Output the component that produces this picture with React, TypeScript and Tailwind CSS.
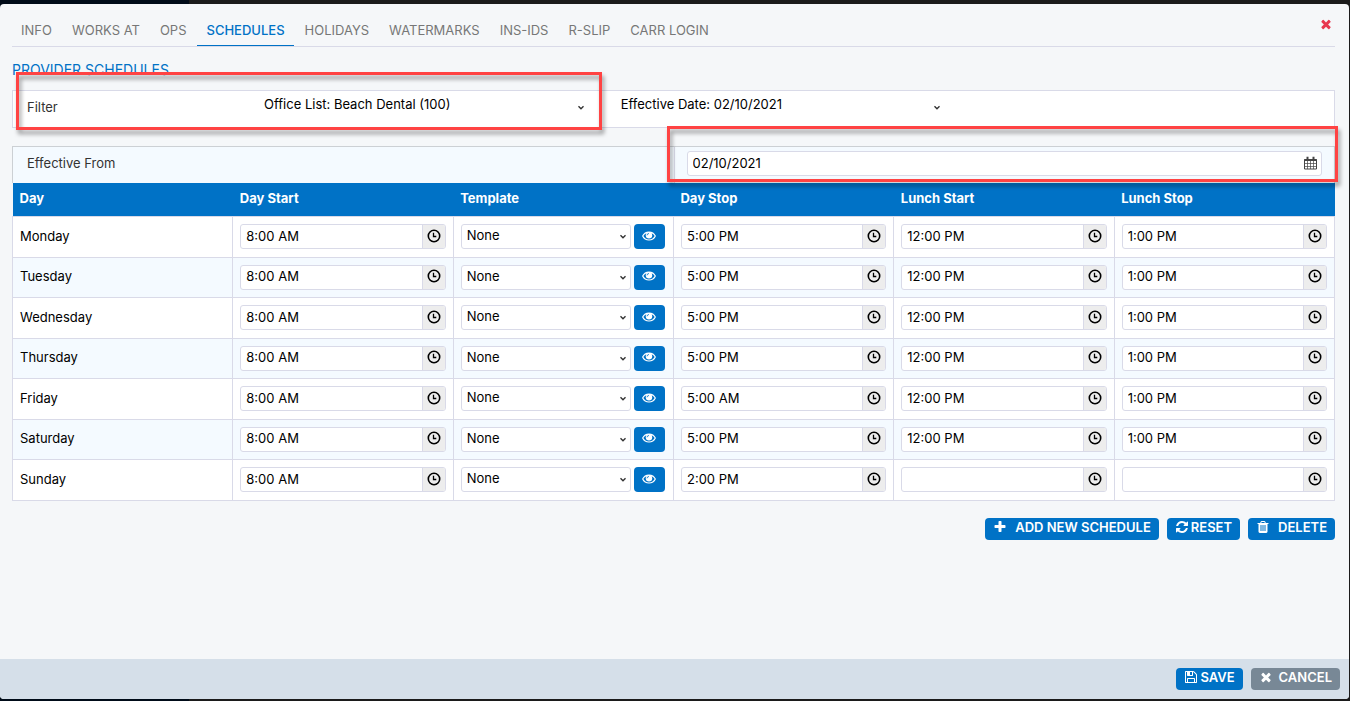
import React, { useState } from 'react';

const ICONS = {
  times: "M1490 1322q0 40-28 68l-136 136q-28 28-68 28t-68-28l-294-294-294 294q-28 28-68 28t-68-28l-136-136q-28-28-28-68t28-68l294-294-294-294q-28-28-28-68t28-68l136-136q28-28 68-28t68 28l294 294 294-294q28-28 68-28t68 28l136 136q28 28 28 68t-28 68l-294 294 294 294q28 28 28 68z",
  plus: "M1600 736v192q0 40-28 68t-68 28h-416v416q0 40-28 68t-68 28h-192q-40 0-68-28t-28-68v-416h-416q-40 0-68-28t-28-68v-192q0-40 28-68t68-28h416v-416q0-40 28-68t68-28h192q40 0 68 28t28 68v416h416q40 0 68 28t28 68z",
  refresh: "M1639 1056q0 5-1 7-64 268-268 434.5t-478 166.5q-146 0-282.500-55t-243.500-157l-129 129q-19 19-45 19t-45-19-19-45v-448q0-26 19-45t45-19h448q26 0 45 19t19 45-19 45l-137 137q71 66 161 102t187 36q134 0 250-65t186-179q11-17 53-117 8-23 30-23h192q13 0 22.500 9.500t9.500 22.500zm25-800v448q0 26-19 45t-45 19h-448q-26 0-45-19t-19-45 19-45l138-138q-148-137-349-137-134 0-250 65t-186 179q-11 17-53 117-8 23-30 23h-199q-13 0-22.500-9.500t-9.500-22.500v-7q65-268 270-434.500t480-166.500q146 0 284 55.500t245 156.500l130-129q19-19 45-19t45 19 19 45z",
  trash: "M704 1376v-704q0-14-9-23t-23-9h-64q-14 0-23 9t-9 23v704q0 14 9 23t23 9h64q14 0 23-9t9-23zm256 0v-704q0-14-9-23t-23-9h-64q-14 0-23 9t-9 23v704q0 14 9 23t23 9h64q14 0 23-9t9-23zm256 0v-704q0-14-9-23t-23-9h-64q-14 0-23 9t-9 23v704q0 14 9 23t23 9h64q14 0 23-9t9-23zm-544-992h448l-48-117q-7-9-17-11h-317q-10 2-17 11zm928 32v64q0 14-9 23t-23 9h-96v948q0 83-47 143.500t-113 60.500h-832q-66 0-113-58.500t-47-141.500v-952h-96q-14 0-23-9t-9-23v-64q0-14 9-23t23-9h309l70-167q15-37 54-63t79-26h320q40 0 79 26t54 63l70 167h309q14 0 23 9t9 23z",
  save: "M512 1536h768v-384h-768v384zm896 0h128v-896q0-14-10-38.500t-20-34.500l-281-281q-10-10-34-20t-39-10v416q0 40-28 68t-68 28h-576q-40 0-68-28t-28-68v-416h-128v1280h128v-416q0-40 28-68t68-28h832q40 0 68 28t28 68v416zm-384-928v-320q0-13-9.500-22.500t-22.500-9.500h-192q-13 0-22.500 9.500t-9.500 22.500v320q0 13 9.500 22.500t22.500 9.500h192q13 0 22.500-9.500t9.500-22.500zm640 32v928q0 40-28 68t-68 28h-1344q-40 0-68-28t-28-68v-1344q0-40 28-68t68-28h928q40 0 88 20t76 48l280 280q28 28 48 76t20 88z",
  eye: "M1664 960q-152-236-381-353 61 104 61 225 0 185-131.500 316.500t-316.500 131.500-316.500-131.500-131.500-316.500q0-121 61-225-229 117-381 353 133 205 333.500 326.500t434.500 121.500 434.500-121.500 333.500-326.500zm-720-384q0-20-14-34t-34-14q-125 0-214.500 89.500t-89.500 214.500q0 20 14 34t34 14 34-14 14-34q0-86 61-147t147-61q20 0 34-14t14-34zm848 384q0 34-20 69-140 230-376.500 368.500t-499.500 138.500-499.500-139-376.500-368q-20-35-20-69t20-69q140-229 376.500-368t499.500-139 499.500 139 376.500 368q20 35 20 69z",
};

const Icon = ({ name, className }: { name: keyof typeof ICONS; className: string }) => (
  <svg viewBox="0 0 1792 1792" fill="currentColor" className={className} aria-hidden="true">
    <path d={ICONS[name]} />
  </svg>
);

const ClockIcon = () => (
  <svg viewBox="0 0 14 14" fill="none" stroke="#000" className="h-3.5 w-3.5" aria-hidden="true">
    <circle cx="7" cy="7" r="5.7" strokeWidth="1.6" />
    <path d="M6.500 3.800v3.700h2.800" strokeWidth="1.3" />
  </svg>
);

// same almond as the eye icon, but with a filled pupil
const EyeIcon = () => (
  <svg viewBox="0 0 14 14" className="h-3.5 w-3.5" aria-hidden="true">
    <path d="M.7 7C3.200 1.700 10.800 1.700 13.300 7 10.800 12.300 3.200 12.300 .7 7z" fill="none" stroke="#fff" strokeWidth="1.2" />
    <circle cx="7" cy="6.300" r="3.200" fill="#fff" />
    <path d="M5 6.300A2 2 0 0 1 7 4.500" fill="none" stroke="#0072c6" strokeWidth=".8" />
  </svg>
);

const CalendarIcon = () => (
  <svg viewBox="0 0 13 14" fill="none" stroke="#444" className="h-3.5 w-[13px]" aria-hidden="true">
    <path d="M.5 3.500h12v9.500h-12z" />
    <path d="M.5 4h12" strokeWidth="2" />
    <path d="M3.500 5v8M6.500 5v8M9.500 5v8M1 7.500h11M1 10.500h11" strokeWidth=".7" />
    <path d="M3.500 .8v2.500M9.500 .8v2.500" strokeWidth="2" />
  </svg>
);

const Chevron = ({ className }: { className: string }) => (
  <svg viewBox="0 0 8 6" fill="none" stroke="#333" strokeWidth="1.4" className={`pointer-events-none absolute h-1.5 w-2 ${className}`} aria-hidden="true">
    <path d="M1.500 1.200 4 3.700 6.500 1.200" />
  </svg>
);

const TABS = ["INFO", "WORKS AT", "OPS", "SCHEDULES", "HOLIDAYS", "WATERMARKS", "INS-IDS", "R-SLIP", "CARR LOGIN"];

const COLUMNS = ["Day", "Day Start", "Template", "Day Stop", "Lunch Start", "Lunch Stop"];

const SCHEDULE = [
  { day: "Monday", start: "8:00 AM", stop: "5:00 PM", lunchStart: "12:00 PM", lunchStop: "1:00 PM" },
  { day: "Tuesday", start: "8:00 AM", stop: "5:00 PM", lunchStart: "12:00 PM", lunchStop: "1:00 PM" },
  { day: "Wednesday", start: "8:00 AM", stop: "5:00 PM", lunchStart: "12:00 PM", lunchStop: "1:00 PM" },
  { day: "Thursday", start: "8:00 AM", stop: "5:00 PM", lunchStart: "12:00 PM", lunchStop: "1:00 PM" },
  { day: "Friday", start: "8:00 AM", stop: "5:00 AM", lunchStart: "12:00 PM", lunchStop: "1:00 PM" },
  { day: "Saturday", start: "8:00 AM", stop: "5:00 PM", lunchStart: "12:00 PM", lunchStop: "1:00 PM" },
  { day: "Sunday", start: "8:00 AM", stop: "2:00 PM", lunchStart: "", lunchStop: "" },
];

const TimeField = ({ label, value }: { label: string; value: string }) => (
  <div className="flex h-[25px] overflow-hidden rounded-[3px] border border-[#d9dae8] bg-white">
    <input type="text" aria-label={label} defaultValue={value} className="min-w-0 flex-1 bg-transparent px-[5px] pb-0.5 outline-none" />
    <button type="button" aria-label={`Pick ${label}`} className="flex w-[23px] items-center justify-center border-l border-[#d9dae8] bg-[#ededed] pb-0.5">
      <ClockIcon />
    </button>
  </div>
);

const FilterSelect = ({ label, value }: { label: string; value: string }) => (
  <div className="relative w-[27%] pr-7">
    <div className="relative">
      <select aria-label={label} className="block h-[25px] w-full appearance-none bg-transparent pl-1 outline-none">
        <option>{value}</option>
      </select>
      <Chevron className="top-3.5 right-1" />
    </div>
  </div>
);

const CELL = "border border-[#d9dae8] px-[7px] py-0";
const BUTTON = "flex h-[22px] items-center rounded-[4px] px-2 pb-1 text-[13px] font-semibold text-white";

export default function App() {
  const [activeTab, setActiveTab] = useState("SCHEDULES");

  return (
    <div className="flex min-h-screen flex-col bg-linear-to-r from-[#000b18] from-14% to-[#1b1b1b] to-14% pt-1 pr-px pb-0.5 font-['Inter',sans-serif] text-[13px] leading-5 text-black">
      <div className="flex flex-1 flex-col overflow-hidden rounded-[4px] bg-[#f5f7f9]">
        <main className="flex-1 pr-[14px] pl-3">
          <header className="relative border-b border-[#d9dae8]">
            <nav className="flex gap-0.5 pt-3">
              {TABS.map((tab) => (
                <button
                  key={tab}
                  type="button"
                  onClick={() => setActiveTab(tab)}
                  className={`h-[30px] border-b px-[9px] pb-0.5 ${activeTab === tab ? 'border-[#0072c6] font-medium text-[#0072c6]' : 'border-transparent text-[#777]'}`}
                >
                  {tab}
                </button>
              ))}
            </nav>
            <button type="button" aria-label="Close" className="absolute top-[13px] right-0.5 text-[#e8384f]">
              <Icon name="times" className="h-3.5 w-3.5" />
            </button>
          </header>

          <h2 className="mt-[13px] mb-2.5 text-[14px] text-[#0072c6]">PROVIDER SCHEDULES</h2>

          <section className="relative mb-[18px] flex h-[38px] border border-[#d9dae8] bg-white">
            <div className="w-[18.7%] px-3.5 py-1.5 text-[#333]">Filter</div>
            <FilterSelect label="Office List" value="Office List: Beach Dental (100)" />
            <FilterSelect label="Effective Date" value="Effective Date: 02/10/2021" />
            <div className="pointer-events-none absolute -top-[19px] right-[55.4%] -bottom-[3px] left-[3px] z-10 border-3 border-[#ff4343] drop-shadow-[2px_4px_2px_rgba(0,0,0,0.4)]" />
          </section>

          <section className="flex h-[37px] border border-b-0 border-[#ccd0d4] bg-[#f4faff]">
            <label htmlFor="effective-from" className="w-1/2 px-3.5 py-1.5 text-[#333]">Effective From</label>
            <div className="relative w-1/2 border-l border-[#d9dae8] px-3 py-1">
              <div className="flex h-[25px] items-center rounded-[3px] border border-[#d9dae8] bg-white pr-1 pb-0.5">
                <input id="effective-from" type="text" defaultValue="02/10/2021" className="min-w-0 flex-1 bg-transparent px-[5px] outline-none" />
                <button type="button" aria-label="Open calendar">
                  <CalendarIcon />
                </button>
              </div>
              <div className="pointer-events-none absolute -top-[21px] -right-1 bottom-px -left-2 z-10 border-3 border-[#ff4343] drop-shadow-[2px_4px_2px_rgba(0,0,0,0.4)]" />
            </div>
          </section>

          <table className="w-full table-fixed border-collapse">
            <thead>
              <tr className="h-[33px] bg-[#0072c6] text-left text-white">
                {COLUMNS.map((column) => (
                  <th key={column} className="px-[7px] pt-0 pb-0.5 font-bold">{column}</th>
                ))}
              </tr>
            </thead>
            <tbody>
              {SCHEDULE.map((row) => (
                <tr key={row.day} className="h-10 bg-[#f4faff] odd:h-[41px] odd:bg-white">
                  <td className="border border-[#d9dae8] px-[7px] pt-0 pb-0.5">{row.day}</td>
                  <td className={CELL}><TimeField label={`${row.day} start`} value={row.start} /></td>
                  <td className={CELL}>
                    <div className="flex gap-[3px] pr-px">
                      <div className="relative flex-1">
                        <select aria-label={`${row.day} template`} className="block h-[25px] w-full appearance-none rounded-[3px] border border-[#d9dae8] bg-white px-[5px] pb-[3px] outline-none">
                          <option>None</option>
                        </select>
                        <Chevron className="top-2.5 right-1" />
                      </div>
                      <button type="button" aria-label={`View ${row.day} template`} className="flex h-[25px] w-[31px] items-center justify-center rounded-[4px] bg-[#0072c6] pb-0.5">
                        <EyeIcon />
                      </button>
                    </div>
                  </td>
                  <td className={CELL}><TimeField label={`${row.day} stop`} value={row.stop} /></td>
                  <td className={CELL}><TimeField label={`${row.day} lunch start`} value={row.lunchStart} /></td>
                  <td className={CELL}><TimeField label={`${row.day} lunch stop`} value={row.lunchStop} /></td>
                </tr>
              ))}
            </tbody>
          </table>

          <div className="mt-[17px] flex justify-end gap-2">
            <button type="button" className={`${BUTTON} gap-2 bg-[#0072c6]`}><Icon name="plus" className="h-3.5 w-3.5" />ADD NEW SCHEDULE</button>
            <button type="button" className={`${BUTTON} gap-0.5 bg-[#0072c6]`}><Icon name="refresh" className="h-3.5 w-3.5" />RESET</button>
            <button type="button" className={`${BUTTON} gap-2 bg-[#0072c6]`}><Icon name="trash" className="h-3.5 w-3.5" />DELETE</button>
          </div>
        </main>

        <footer className="flex h-10 items-center justify-end gap-2 bg-[#d5dfe9] pr-[9px]">
          <button type="button" className={`${BUTTON} gap-0.5 bg-[#0072c6]`}><Icon name="save" className="h-3.5 w-3.5" />SAVE</button>
          <button type="button" className={`${BUTTON} gap-1.5 bg-[#788896]`}><Icon name="times" className="h-3.5 w-3.5" />CANCEL</button>
        </footer>
      </div>
    </div>
  );
}
